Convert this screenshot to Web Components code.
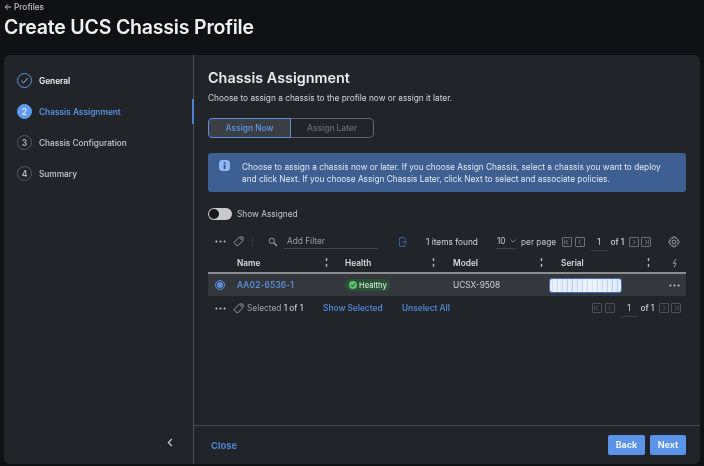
<!DOCTYPE html>
<html><head><meta charset="utf-8">
<style>
html,body{margin:0;padding:0;background:#0f1113;}
body{width:704px;height:466px;overflow:hidden;font-family:Inter,"Liberation Sans",sans-serif;color:#e4e6e8;}
</style></head><body>
<ucs-app></ucs-app>
<script>
function def(name,css,html){
  customElements.define(name,class extends HTMLElement{
    constructor(){super();const t=document.createElement('template');
      t.innerHTML='<style>'+css+'</style>'+html(this);
      this.attachShadow({mode:'open'}).appendChild(t.content.cloneNode(true));}
  });
}
const SORT='<svg width="5" height="9" viewBox="0 0 5 9"><path d="M2.5 0.8v1.8M2.5 6.4v1.8" stroke="#b5b8bb" stroke-width="1.5" stroke-linecap="round"/></svg>';
const DOTS='<svg width="11" height="3" viewBox="0 0 11 3" style="flex:none"><circle cx="1.4" cy="1.5" r="1" fill="#c4c7ca"/><circle cx="5.5" cy="1.5" r="1" fill="#c4c7ca"/><circle cx="9.6" cy="1.5" r="1" fill="#c4c7ca"/></svg>';
const TAG='<svg width="11" height="11" viewBox="0 0 12 12" fill="none"><path d="M1 7.2 6.8 1.4c.2-.2.4-.3.7-.3h3c.2 0 .4.2.4.4v3c0 .3-.1.5-.3.7L4.8 11 1 7.2Z" stroke="#a8abae" stroke-width="1"/><circle cx="8.7" cy="3.3" r=".8" fill="#a8abae"/></svg>';
function pg(kind,dim){const c=dim?'#4d5154':'#6c7074';
  const p={first:'M6.3 2.5 4 5 6.3 7.5M2.7 2.5v5',prev:'M6 2.5 3.7 5 6 7.5',next:'M4 2.5 6.3 5 4 7.5',last:'M3.7 2.5 6 5 3.7 7.5M7.3 2.5v5'}[kind];
  return `<svg width="10" height="10" viewBox="0 0 10 10" fill="none" style="flex:none"><rect x=".5" y=".5" width="9" height="9" rx=".5" stroke="${c}"/><path d="${p}" stroke="${c}"/></svg>`;}
const PGCSS=`
.pgs{display:flex;align-items:center;flex:none}
.pgs svg+svg{margin-left:2.5px}
.num{width:17px;height:14px;margin:0 3px 0 6px;display:flex;justify-content:center;align-items:center;position:relative}
.num::after{content:"";position:absolute;left:0;right:0;bottom:-2px;height:1px;background:#3c4044}
.of{width:14px;margin-right:4px;font-weight:500;white-space:nowrap}
`;

def('ucs-step',`
:host{display:flex;align-items:center;gap:7px;height:31px;font-size:8.3px;font-weight:500;color:#c9ccce;position:relative}
.c{width:15px;height:15px;box-sizing:border-box;border-radius:50%;border:1px solid #55595d;display:flex;align-items:center;justify-content:center;font-size:8.5px;font-weight:600;color:#b5b8ba}
:host([state=done]){color:#eef0f1;font-weight:600}
:host([state=done]) .c{border-color:#5f93e0}
:host([state=active]){color:#5a8fdf;font-weight:600}
:host([state=active]) .c{background:#5f9bf0;border-color:#5f9bf0;color:#dfe9f8}
`,h=>{
  const s=h.getAttribute('state');
  return `<span class="c">${s==='done'?'<svg width="9" height="9" viewBox="0 0 9 9" fill="none"><path d="M1.5 4.8 3.6 6.8 7.6 2.2" stroke="#b9c9e0" stroke-width=".9"/></svg>':h.getAttribute('n')}</span><slot></slot>`;
});

def('ucs-sidebar',`
:host{display:flex;flex-direction:column;width:189px;flex:none;box-sizing:border-box;padding:10px 0 0 13px;border-right:1px solid #4b4f53;position:relative}
.steps{display:flex;flex-direction:column}
.bar{position:absolute;right:-1px;top:44px;width:2px;height:25px;background:#4f82cf}
.col{margin-top:auto;align-self:flex-end;margin-right:20px;margin-bottom:16px;height:11px}
`,()=>`<div class="steps">
<ucs-step state="done" n="1">General</ucs-step>
<ucs-step state="active" n="2">Chassis Assignment</ucs-step>
<ucs-step n="3">Chassis Configuration</ucs-step>
<ucs-step n="4">Summary</ucs-step></div>
<span class="bar"></span>
<svg class="col" width="6" height="9" viewBox="0 0 6 9" fill="none"><path d="M4.8 1 1.4 4.5 4.8 8" stroke="#c4c7ca" stroke-width="1.2"/></svg>`);

def('ucs-segment',`
:host{display:inline-flex;height:20px;font-size:8.3px;font-weight:600;box-sizing:border-box}
span{display:flex;align-items:center;justify-content:center;box-sizing:border-box}
.a{width:83px;background:#3b3e42;color:#5b8fdc;border:1px solid #5b8fdc;border-radius:4px 0 0 4px}
.b{width:83px;color:#63676b;border:1px solid #63676b;border-left:0;border-radius:0 5px 5px 0}
`,()=>`<span class="a">Assign Now</span><span class="b">Assign Later</span>`);

def('ucs-banner',`
:host{display:flex;gap:12px;height:39px;box-sizing:border-box;padding:8px 0 0 11px;background:#3d5f92;border-radius:3px;font-size:8.3px;line-height:12px;color:#e3e8ef;white-space:nowrap}
svg{flex:none;margin-top:-1px}
`,()=>`<svg width="11" height="11" viewBox="0 0 11 11"><rect width="11" height="11" rx="3.5" fill="#8db8f5"/><rect x="4.7" y="4.7" width="1.7" height="4.2" fill="#2f4f80"/><rect x="4.7" y="2.2" width="1.7" height="1.6" fill="#2f4f80"/></svg><div><slot></slot></div>`);

def('ucs-toggle',`
:host{display:flex;align-items:center;gap:5px;font-size:8.3px;color:#c4c7c9}
.t{width:24px;height:12px;border-radius:6px;background:#c9c9c9;position:relative;flex:none}
.t::before{content:"";position:absolute;left:1px;top:1px;width:10px;height:10px;border-radius:50%;background:#15171a}
`,()=>`<span class="t"></span><slot></slot>`);

def('ucs-toolbar',`
:host{display:flex;align-items:center;height:21px;font-size:8.3px;color:#c4c7c9;padding-left:7px;white-space:nowrap}
.tag{margin-left:7px;display:flex}
.sep{width:1px;height:10px;background:#34383c;margin:0 15px 0 8px;flex:none}
.filter{margin-left:6px;width:94px;flex:none;box-sizing:border-box;height:14px;border-bottom:1px solid #44484c;color:#9a9da0;padding-left:3px;line-height:12px}
.exp{margin-left:21px;display:flex}
.found{margin-left:19px;width:50px;flex:none;color:#d2d4d6}
.size{margin-left:20px;display:flex;align-items:center;justify-content:space-between;height:14px;border-bottom:1px solid #3c4044;padding:0 1px;width:21px;box-sizing:border-box;flex:none;color:#c9ccce}
.pp{margin-left:4px;width:35px;flex:none}
.pgs{margin-left:6px;color:#d2d4d6}
.gear{margin-left:17px;display:flex}
${PGCSS}
`,()=>`${DOTS}<span class="tag">${TAG}</span><span class="sep"></span>
<svg width="10" height="10" viewBox="0 0 10 10" fill="none" style="flex:none"><circle cx="3.8" cy="3.8" r="2.6" stroke="#9a9da0"/><path d="M5.8 5.8 9 9" stroke="#9a9da0" stroke-width="1.4"/></svg>
<span class="filter">Add Filter</span>
<span class="exp"><svg width="8" height="10" viewBox="0 0 8 10" fill="none"><path d="M6 2.6V1.6L5 .6H.6v8.8H6V7.4M2.8 5h4.6M6 3.4 7.6 5 6 6.6" stroke="#3a6cae" stroke-width=".9"/></svg></span>
<span class="found">1 items found</span>
<span class="size">10<svg width="6" height="4" viewBox="0 0 6 4" fill="none"><path d="M.5.5 3 3 5.5.5" stroke="#8d9093" stroke-width=".8"/></svg></span>
<span class="pp">per page</span>
<span class="pgs">${pg('first')}${pg('prev')}<span class="num">1</span><span class="of">of 1</span>${pg('next')}${pg('last')}</span>
<span class="gear"><svg width="12" height="12" viewBox="0 0 12 12" fill="none"><path d="M4.9 .9h2.2l.3 1.5 1-.6 1.5 1.5-.6 1.1 1.6.4v2.1l-1.6.4.6 1.1-1.5 1.5-1-.6-.3 1.5H4.9l-.3-1.5-1 .6-1.5-1.5.6-1.1L1.1 7V4.9l1.6-.4-.6-1.1 1.5-1.5 1 .6z" stroke="#a8abae" stroke-width=".9"/><circle cx="6" cy="6" r="1.9" stroke="#a8abae" stroke-width=".9"/></svg></span>`);

def('ucs-table',`
:host{display:block;font-size:8.3px}
.r{display:grid;grid-template-columns:29px 108px 108px 108px 108px 17px;align-items:center}
.h{height:20px;box-sizing:border-box;padding-top:1px;font-weight:600;color:#d8dadb}
.line{height:2px;background:#8b8e91}
.h>div{display:flex;justify-content:space-between;align-items:center;padding-right:16px}
.h>div:nth-child(3),.h>div:nth-child(4){padding-right:17px}
.h>div:nth-child(5){padding-right:18px}
.h>div.bolt{padding:0 0 0 3px;justify-content:flex-start}
.b{height:22px;box-sizing:border-box;background:#34383c;color:#cfd1d3}
.name{color:#5b8fdc;font-weight:600;letter-spacing:.02em}
.radio{width:10px;height:10px;box-sizing:border-box;border:1px solid #5b8fdc;border-radius:50%;margin-left:7px;display:flex;align-items:center;justify-content:center}
.radio::before{content:"";width:6px;height:6px;border-radius:50%;background:#5b8fdc}
.pill{display:inline-flex;align-items:center;gap:2px;height:12px;padding:0 0 0 4px;border-radius:6px;background:#2a5236;color:#cfe3d2;font-size:7.6px;font-weight:500;box-sizing:border-box;width:45px;white-space:nowrap;vertical-align:middle}
.dot{width:8px;height:8px;border-radius:50%;background:#5cc26c;display:flex;align-items:center;justify-content:center;flex:none}
.serial{width:71px;height:13px;margin-left:-11px;border-radius:2px;background:linear-gradient(90deg,rgba(255,255,255,.35),rgba(255,255,255,0) 30%,rgba(255,255,255,.4) 60%,rgba(255,255,255,0) 90%),repeating-linear-gradient(90deg,#dfe8f8 0 2px,#b8cdf0 2px 3px,#e9effa 3px 5px);box-shadow:0 0 0 1px #3f6fc0}
.more{display:flex}
.cell{display:flex;align-items:center}
`,()=>`<div class="r h"><span></span><div>Name${SORT}</div><div>Health${SORT}</div><div>Model${SORT}</div><div>Serial${SORT}</div>
<div class="bolt"><svg width="6" height="10" viewBox="0 0 6 10" fill="none"><path d="M4 .8 1.3 5.3h2.8L2 9.2" stroke="#a0a3a6" stroke-width=".9"/></svg></div></div>
<div class="line"></div>
<div class="r b"><span class="radio"></span><span class="name">AA02-6536-1</span>
<span class="cell"><span class="pill"><span class="dot"><svg width="6" height="6" viewBox="0 0 5 5" fill="none"><path d="M.8 2.6 2 3.8 4.2 1.2" stroke="#173a20" stroke-width=".8"/></svg></span>Healthy</span></span>
<span>UCSX-9508</span><span class="serial"></span><span class="more">${DOTS}</span></div>`);

def('ucs-selbar',`
:host{display:flex;align-items:center;height:24px;font-size:8.3px;color:#9ea1a4;padding-left:7px;white-space:nowrap}
.tag{margin-left:7px;display:flex}
.s{margin-left:3px;width:57px;flex:none}
b{font-weight:500;color:#c9ccce}
a{color:#4f82cf;font-weight:600}
.a1{margin-left:19px;width:60px;flex:none}.a2{margin-left:19px}
.pgs{margin-left:auto;margin-right:5px;color:#cfd1d3}
${PGCSS}
`,()=>`${DOTS}<span class="tag">${TAG}</span><span class="s">Selected <b>1 of 1</b></span>
<a class="a1">Show Selected</a><a class="a2">Unselect All</a>
<span class="pgs">${pg('first',1)}${pg('prev',1)}<span class="num">1</span><span class="of">of 1</span>${pg('next',1)}${pg('last',1)}</span>`);

def('ucs-footer',`
:host{display:flex;align-items:center;height:39px;box-sizing:border-box;border-top:1px solid #45494d;padding:0 14px 0 17px;font-size:9.4px;font-weight:700}
a{color:#4f82cf}
.sp{flex:1}
button{all:unset;box-sizing:border-box;height:20px;width:37px;background:#5b93e8;border-radius:2px;color:#eef3fc;text-align:center;font:700 9px/20px Inter,sans-serif}
.n{margin-left:5px;width:36px}
`,()=>`<a>Close</a><span class="sp"></span><button>Back</button><button class="n">Next</button>`);

def('ucs-main',`
:host{flex:1;display:flex;flex-direction:column;min-width:0}
.c{flex:1;padding:13px 14px 0 14px;display:flex;flex-direction:column}
h2{margin:0;font-size:14.4px;line-height:20px;font-weight:600;color:#e8eaeb}
p{margin:4px 0 0;font-size:8.3px;line-height:12px;color:#d4d6d8}
ucs-segment{margin-top:14px;align-self:flex-start}
ucs-banner{margin-top:15px}
ucs-toggle{margin-top:16px}
ucs-toolbar{margin-top:11px}
`,()=>`<div class="c"><h2>Chassis Assignment</h2>
<p>Choose to assign a chassis to the profile now or assign it later.</p>
<ucs-segment></ucs-segment>
<ucs-banner>Choose to assign a chassis now or later. If you choose Assign Chassis, select a chassis you want to deploy<br>and click Next. If you choose Assign Chassis Later, click Next to select and associate policies.</ucs-banner>
<ucs-toggle>Show Assigned</ucs-toggle>
<ucs-toolbar></ucs-toolbar>
<ucs-table></ucs-table>
<ucs-selbar></ucs-selbar></div>
<ucs-footer></ucs-footer>`);

def('ucs-app',`
:host{display:flex;flex-direction:column;width:704px;height:466px;box-sizing:border-box;padding:0 4px 2px;filter:blur(.3px)}
.back{font-size:8.3px;line-height:12px;color:#bfc2c4;font-weight:500;display:flex;align-items:center;gap:2px;padding-top:1px}
h1{margin:0;font-size:19.5px;line-height:28px;font-weight:600;color:#eef0f1;letter-spacing:-.01em}
.panel{margin-top:14px;flex:1;display:flex;background:#212529;border-radius:6px;overflow:hidden;min-height:0}
ucs-sidebar{width:190px}
`,()=>`<div class="back"><svg width="8" height="8" viewBox="0 0 8 8" fill="none"><path d="M7 4H1.3M3.8 1.4 1.2 4l2.6 2.6" stroke="#bfc2c4"/></svg>Profiles</div>
<h1>Create UCS Chassis Profile</h1>
<div class="panel"><ucs-sidebar></ucs-sidebar><ucs-main></ucs-main></div>`);
</script>
</body></html>
